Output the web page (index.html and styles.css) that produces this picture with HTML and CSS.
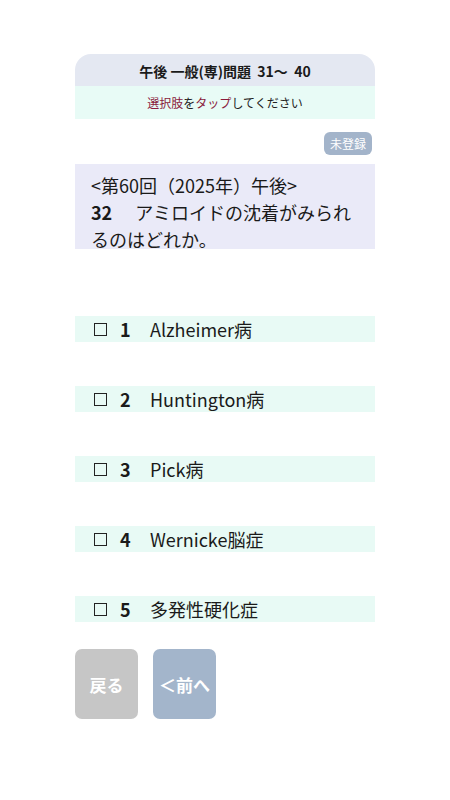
FILE: index.html
```html
<!DOCTYPE html>
<html lang="ja">
<head>
<meta charset="utf-8">
<link rel="stylesheet" href="styles.css">
</head>
<body>
<div class="page">
  <div class="header">午後 一般(専)問題&nbsp; 31～&nbsp; 40</div>
  <div class="instr"><span class="hl">選択肢</span>を<span class="hl">タップ</span>してください</div>
  <div class="badge-row"><span class="badge">未登録</span></div>
  <div class="question">
    <div class="qline">&lt;第60回（2025年）午後&gt;</div>
    <div class="qline"><b class="qnum">32</b>アミロイドの沈着がみられるのはどれか。</div>
  </div>
  <div class="choices">
    <div class="choice"><span class="box"></span><b class="cn">1</b><span>Alzheimer病</span></div>
    <div class="choice"><span class="box"></span><b class="cn">2</b><span>Huntington病</span></div>
    <div class="choice"><span class="box"></span><b class="cn">3</b><span>Pick病</span></div>
    <div class="choice"><span class="box"></span><b class="cn">4</b><span>Wernicke脳症</span></div>
    <div class="choice"><span class="box"></span><b class="cn">5</b><span>多発性硬化症</span></div>
  </div>
  <div class="buttons">
    <div class="btn back">戻る</div>
    <div class="btn prev">＜前へ</div>
  </div>
</div>
</body>
</html>
```
FILE: styles.css
```css
* { box-sizing: border-box; }
body {
  margin: 0;
  background: #fff;
  font-family: "Noto Sans CJK JP", "Noto Sans", sans-serif;
  color: #1a1a1a;
}
.page {
  width: 300px;
  margin-left: 75px;
  padding-top: 54px;
}
.header {
  height: 32px;
  background: #e4e8f2;
  border-radius: 16px 16px 0 0;
  font-size: 14px;
  font-weight: bold;
  display: flex;
  align-items: center;
  justify-content: center;
  padding-top: 2px;
}
.instr {
  height: 33px;
  background: #e8fbf6;
  font-size: 12px;
  display: flex;
  align-items: center;
  justify-content: center;
  color: #222;
}
.hl { color: #8a1a3c; }
.badge-row {
  display: flex;
  justify-content: flex-end;
  padding: 13px 3px 0 0;
}
.badge {
  background: #a3b4ca;
  color: #fff;
  font-size: 12px;
  height: 23px;
  width: 48px;
  border-radius: 6px;
  display: flex;
  align-items: center;
  justify-content: center;
}
.question {
  margin-top: 9px;
  height: 85px;
  background: #eaeaf8;
  padding: 8px 16px 0 16px;
  font-size: 18px;
  line-height: 27px;
  color: #1a1a1a;
}
.qnum { margin-right: 23px; font-weight: bold; }
.choices {
  margin-top: 67px;
  display: flex;
  flex-direction: column;
  gap: 44px;
}
.choice {
  height: 26px;
  background: #e8faf5;
  display: flex;
  align-items: center;
  font-size: 18px;
  padding-left: 19px;
  color: #1a1a1a;
}
.box {
  width: 13px;
  height: 13px;
  border: 1.5px solid #222;
  margin-right: 13px;
}
.cn { width: 30px; font-weight: bold; }
.buttons {
  margin-top: 27px;
  display: flex;
  gap: 15px;
}
.btn {
  width: 63px;
  height: 70px;
  border-radius: 7px;
  color: #fff;
  font-weight: bold;
  font-size: 17px;
  display: flex;
  align-items: center;
  justify-content: center;
}
.back { background: #c6c6c6; }
.prev { background: #a3b5cb; }
```
